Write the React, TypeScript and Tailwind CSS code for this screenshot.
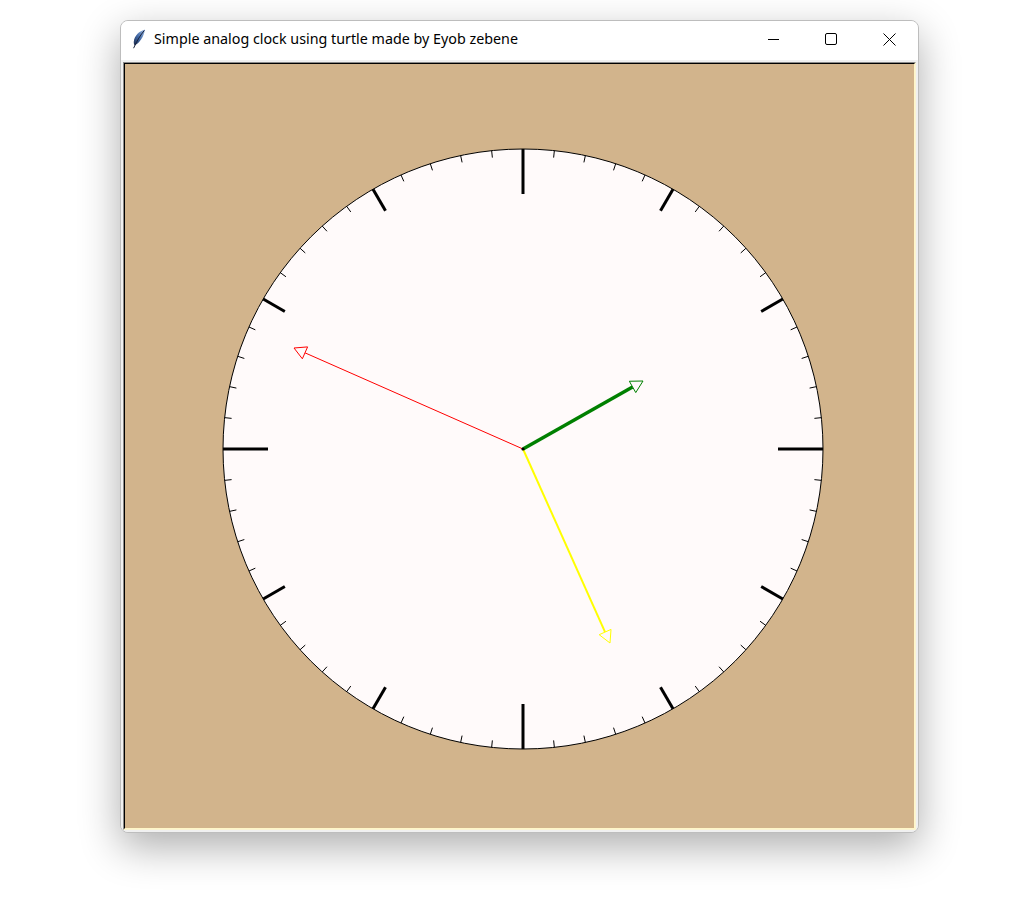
import React from "react";

const CX = 523;
const CY = 449;
const R = 300;

function pt(deg: number, r: number) {
  const t = (deg * Math.PI) / 180;
  return { x: CX + r * Math.sin(t), y: CY - r * Math.cos(t) };
}

function Hand({ tipX, tipY, color, width }: { tipX: number; tipY: number; color: string; width: number }) {
  const dx = tipX - CX;
  const dy = tipY - CY;
  const L = Math.sqrt(dx * dx + dy * dy);
  const ux = dx / L;
  const uy = dy / L;
  const head = 12;
  const hw = 6.5;
  const bx = tipX - ux * head;
  const by = tipY - uy * head;
  const px = -uy;
  const py = ux;
  const p1 = `${tipX},${tipY}`;
  const p2 = `${bx + px * hw},${by + py * hw}`;
  const p3 = `${bx - px * hw},${by - py * hw}`;
  return (
    <g>
      <line x1={CX} y1={CY} x2={bx} y2={by} stroke={color} strokeWidth={width} />
      <polygon points={`${p1} ${p2} ${p3}`} fill="#fffafa" stroke={color} strokeWidth={1} strokeLinejoin="miter" />
    </g>
  );
}

function Clock() {
  const ticks = [];
  for (let i = 0; i < 60; i++) {
    const deg = i * 6;
    let inner = 293;
    let w = 1;
    if (i % 15 === 0) {
      inner = 255;
      w = 3;
    } else if (i % 5 === 0) {
      inner = 275;
      w = 3;
    }
    const a = pt(deg, R);
    const b = pt(deg, inner);
    ticks.push(<line key={i} x1={a.x} y1={a.y} x2={b.x} y2={b.y} stroke="#000" strokeWidth={w} />);
  }
  return (
    <svg width={789} height={764} viewBox="125 64 789 764" className="block">
      <circle cx={CX} cy={CY} r={R} fill="#fffafa" stroke="#000" strokeWidth={1} />
      {ticks}
      <Hand tipX={294} tipY={348} color="#ff0000" width={1} />
      <Hand tipX={610} tipY={643} color="#ffff00" width={2} />
      <Hand tipX={643} tipY={381} color="#008000" width={3.5} />
      <circle cx={CX} cy={CY} r={1.6} fill="#000" />
    </svg>
  );
}

function Feather() {
  return (
    <svg width="14" height="20" viewBox="0 0 14 20">
      <defs>
        <linearGradient id="fg" x1="0" y1="1" x2="1" y2="0">
          <stop offset="0" stopColor="#1d2c4c" />
          <stop offset="0.45" stopColor="#3f66a3" />
          <stop offset="1" stopColor="#9dbbe3" />
        </linearGradient>
      </defs>
      <path d="M13 0.5 C 7.5 2, 2.5 6.5, 1.8 12.5 C 1.6 14.2, 2 15.6, 2.8 16.5 C 7.5 13.8, 11.8 8.2, 13 0.5 Z" fill="url(#fg)" />
      <path d="M12.4 1.4 C 8.5 6, 5 11.5, 1.6 19.2" stroke="#18213a" strokeWidth="1" fill="none" />
    </svg>
  );
}

export default function App() {
  return (
    <div className="w-[1031px] h-[912px] bg-white pt-[20px] pl-[120px] overflow-hidden">
      <div className="w-[799px] h-[813px] border border-[#bdbdbd] rounded-[8px] overflow-hidden bg-[#f0f0f0] shadow-[0_14px_40px_rgba(0,0,0,0.32)] flex flex-col">
        <div className="h-[39px] bg-white flex items-center pb-[3px]">
          <div className="pl-[11px] w-[33px] flex items-center">
            <Feather />
          </div>
          <div
            className="text-[14.3px] text-black leading-none"
            style={{ fontFamily: '"Segoe UI", "Noto Sans", Arial, sans-serif' }}
          >
            Simple analog clock using turtle made by Eyob zebene
          </div>
          <div className="ml-auto flex h-full">
            <div className="w-[58px] h-full flex items-center justify-center">
              <svg width="11" height="11" viewBox="0 0 11 11">
                <line x1="0" y1="5.5" x2="11" y2="5.5" stroke="#000" strokeWidth="1" />
              </svg>
            </div>
            <div className="w-[58px] h-full flex items-center justify-center">
              <svg width="12" height="12" viewBox="0 0 12 12">
                <rect x="0.5" y="0.5" width="11" height="11" rx="1.5" fill="none" stroke="#000" strokeWidth="1" />
              </svg>
            </div>
            <div className="w-[58px] h-full flex items-center justify-center">
              <svg width="13" height="13" viewBox="0 0 13 13">
                <line x1="0.5" y1="0.5" x2="12.5" y2="12.5" stroke="#000" strokeWidth="1" />
                <line x1="12.5" y1="0.5" x2="0.5" y2="12.5" stroke="#000" strokeWidth="1" />
              </svg>
            </div>
          </div>
        </div>
        <div className="flex-1 pt-[2px] pl-[2px] pr-[2px] pb-[2px] bg-[#f0f0f0]">
          <div className="w-[793px] h-[768px] border border-t-[#8a8a8a] border-l-[#8a8a8a] border-r-[#fbf4d2] border-b-[#fbf4d2]">
            <div className="w-full h-full border border-t-black border-l-black border-r-[#fff6c8] border-b-[#fff6c8] bg-[#d2b48c] overflow-hidden">
              <Clock />
            </div>
          </div>
        </div>
      </div>
    </div>
  );
}
